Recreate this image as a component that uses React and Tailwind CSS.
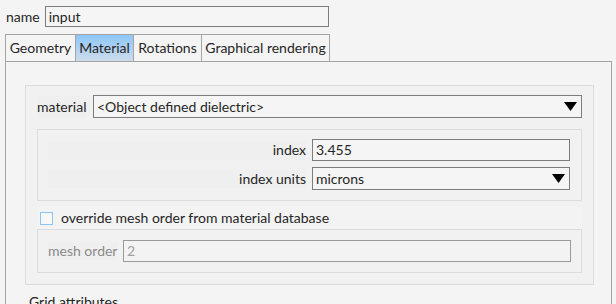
import React from 'react';

function Arrow() {
  return (
    <svg width="13" height="9" viewBox="0 0 13 9" className="shrink-0">
      <path d="M0 0 H13 L6.5 9 Z" fill="#000" />
    </svg>
  );
}

function Tab({ label, width, active }) {
  return (
    <div
      className={`h-[27px] border border-[#a4a4a4] border-b-0 flex items-center justify-center ${width} ${
        active ? 'bg-gradient-to-b from-[#8cc6f8] to-[#cddcea]' : 'bg-[#f4f4f4]'
      } -ml-px first:ml-0`}
    >
      {label}
    </div>
  );
}

export default function App() {
  return (
    <div className="w-[616px] h-[304px] overflow-hidden bg-[#f4f4f4] text-[#262626] text-[14px] leading-none flex flex-col font-['Lato','Noto_Sans',sans-serif]">
      {/* name row */}
      <div className="flex items-center pt-[6px] pl-[6px] gap-[5px]">
        <span>name</span>
        <div className="w-[284px] h-[21px] border border-[#7d7d7d] bg-[#f5f5f5] flex items-center px-[3px]">input</div>
      </div>

      {/* tabs */}
      <div className="flex ml-[5px] mt-[7px]">
        <Tab label="Geometry" width="w-[71px]" />
        <Tab label="Material" width="w-[59px]" active />
        <Tab label="Rotations" width="w-[69px]" />
        <Tab label="Graphical rendering" width="w-[129px]" />
      </div>

      {/* panel */}
      <div className="ml-[5px] w-[607px] flex-1 border border-[#a4a4a4] border-b-0 pt-[23px] pl-[19px]">
        <div className="w-[569px] border border-[#dcdcdc] bg-[#f1f1f1] pt-[9px] pb-[11px] pl-[11px]">
          {/* material row */}
          <div className="flex items-center gap-[6px]">
            <div className="w-[50px] h-[22px] flex items-center bg-[#efefef] whitespace-nowrap">material</div>
            <div className="w-[489px] h-[23px] border border-[#7d7d7d] bg-[#f5f5f5] flex items-center justify-between pl-[3px] pr-[4px]">
              <span>&lt;Object defined dielectric&gt;</span>
              <Arrow />
            </div>
          </div>

          {/* index group */}
          <div className="w-[545px] mt-[11px] border border-[#dcdcdc] bg-[#f1f1f1] pt-[9px] pb-[10px] pl-[10px] flex flex-col gap-[6px]">
            <div className="flex items-center gap-[6px]">
              <div className="w-[258px] h-[19px] bg-[#efefef] flex items-center justify-end">index</div>
              <div className="w-[258px] h-[22px] border border-[#7d7d7d] bg-[#f5f5f5] flex items-center px-[3px]">3.455</div>
            </div>
            <div className="flex items-center gap-[6px]">
              <div className="w-[258px] h-[19px] bg-[#efefef] flex items-center justify-end">index units</div>
              <div className="w-[258px] h-[23px] border border-[#7d7d7d] bg-[#f5f5f5] flex items-center justify-between pl-[3px] pr-[4px]">
                <span>microns</span>
                <Arrow />
              </div>
            </div>
          </div>

          {/* checkbox row */}
          <div className="w-[545px] mt-[6px] h-[22px] bg-[#f3f3f3] flex items-center pl-[3px] gap-[8px]">
            <div className="w-[13px] h-[13px] border border-[#8cc4f2] bg-[#f7f7f7]" />
            <span>override mesh order from material database</span>
          </div>

          {/* mesh order group */}
          <div className="w-[545px] h-[44px] border border-[#dcdcdc] bg-[#f1f1f1] flex items-center pl-[10px] gap-[6px]">
            <div className="w-[69px] h-[18px] bg-[#efefef] flex items-center text-[#8a8a8a] whitespace-nowrap">mesh order</div>
            <div className="w-[448px] h-[22px] border border-[#9a9a9a] bg-[#f3f3f3] flex items-center px-[3px] text-[#a0a0a0]">2</div>
          </div>
        </div>

        <div className="pl-[4px] pt-[10px]">Grid attributes</div>
      </div>
    </div>
  );
}
